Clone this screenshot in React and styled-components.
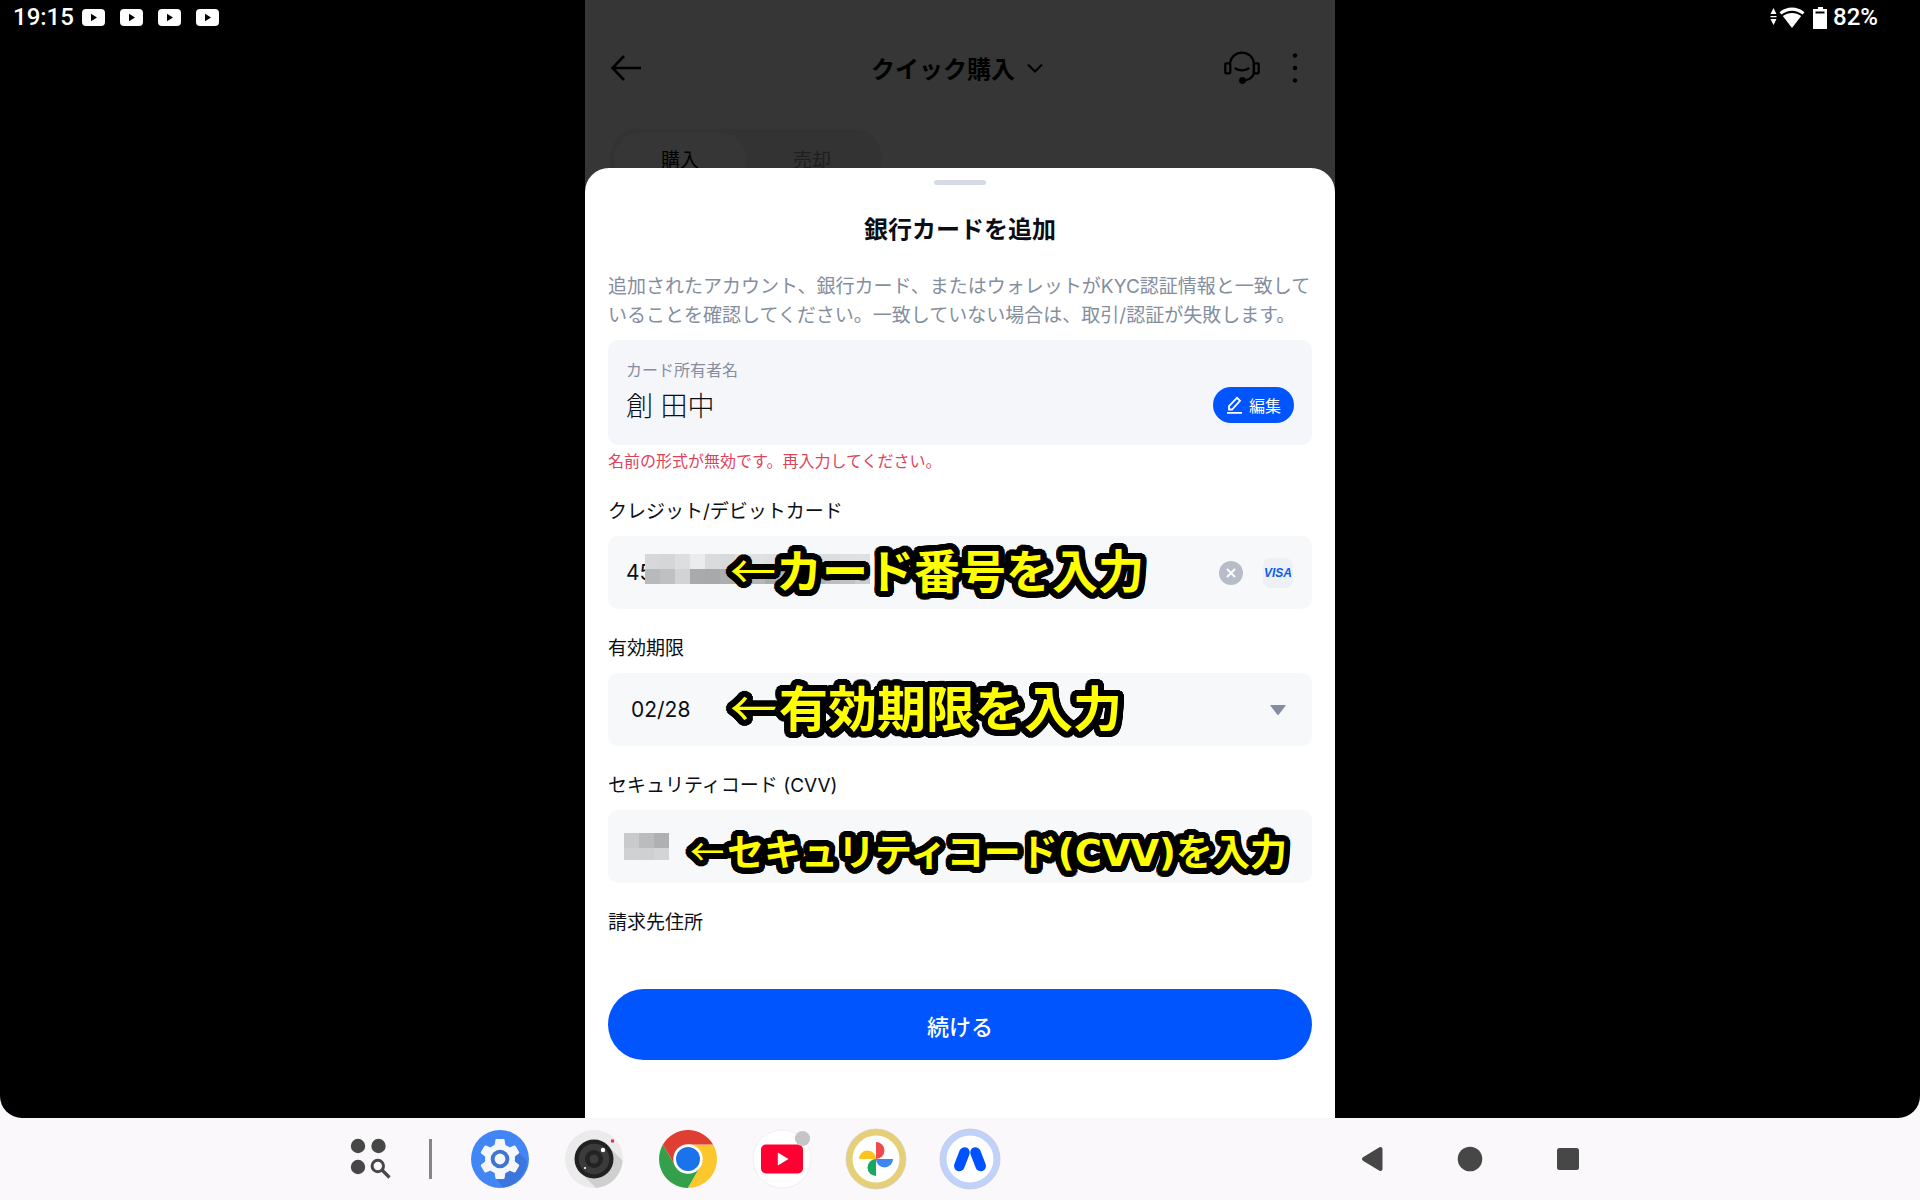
import React, { useState } from "react";
import styled, { createGlobalStyle } from "styled-components";

const cardTiles = [
  "#d8d8da", "#d5d6d8", "#dddee0", "#ebecee", "#dadbdd", "#d8d9db", "#e2e2e4", "#e0e1e2",
  "#dedfe0", "#dcddde", "#dedfe0", "#dcddde", "#dcddde", "#dedfe0", "#dfe0e1",
  "#b8b9ba", "#bfc0c2", "#d2d3d5", "#a9aaab", "#a8a9aa", "#acadae", "#b6b7b8", "#b4b5b6",
  "#a9aaab", "#b0b1b2", "#b9babb", "#b2b3b4", "#bcbdbe", "#c0c1c2", "#cbcccd",
];
const cvvTiles = ["#c9cacb", "#bbbcbd", "#afb0b1", "#d0d1d2", "#cfd0d1", "#d3d4d5"];

// round black outline for the yellow notes, built from rings of hard shadows
const ring = (radius, steps) =>
  Array.from({ length: steps }, (_, i) => {
    const angle = (i / steps) * Math.PI * 2;
    return `${Math.round(Math.cos(angle) * radius)}px ${Math.round(Math.sin(angle) * radius)}px 0 #000`;
  });
const outline = [...ring(3, 12), ...ring(6, 36)].join(", ");

const PlayBadge = () => (
  <svg width="23" height="17" viewBox="0 0 23 17">
    <rect width="23" height="17" rx="4" fill="#fff" />
    <path d="M9 4.8v7.4l6-3.7z" fill="#000" />
  </svg>
);

const Mosaic = ({ tiles, columns, lastRow }) => (
  <Tiles $columns={columns} $lastRow={lastRow} aria-hidden="true">
    {tiles.map((color, i) => (
      <Tile key={i} $color={color} />
    ))}
  </Tiles>
);

const App = () => {
  const [card, setCard] = useState("45");
  const [expiry, setExpiry] = useState("02/28");
  const [cvv, setCvv] = useState("");

  return (
    <Page>
      <GlobalStyle />
      <Screen>
        <StatusLeft>
          <span>19:15</span>
          <Badges>
            <PlayBadge />
            <PlayBadge />
            <PlayBadge />
            <PlayBadge />
          </Badges>
        </StatusLeft>

        <Phone>
          <Header>
            <IconButton aria-label="戻る">
              <svg width="32" height="28" viewBox="0 0 32 28" fill="none" stroke="#000" strokeWidth="2.6">
                <path d="M14 2 2.5 14 14 26M2.5 14H31" />
              </svg>
            </IconButton>
            <HeaderTitle>
              クイック購入
              <svg width="16" height="10" viewBox="0 0 16 10" fill="none" stroke="#000" strokeWidth="2">
                <path d="M1 1.5 8 8.5l7-7" />
              </svg>
            </HeaderTitle>
            <HeaderActions>
              <IconButton aria-label="サポート">
                <svg width="36" height="34" viewBox="0 0 36 34" fill="none" stroke="#000" strokeWidth="2.2">
                  <path d="M6 12C7 5.500 12 1.600 18 1.600S29 5.500 30 12v10c-1 4-5 7-11 7.500" />
                  <rect x="1.300" y="12.300" width="5" height="10" rx="0.800" />
                  <rect x="29.700" y="12.300" width="5" height="10" rx="0.800" />
                  <path d="M11.500 17.500c3.500 2.600 9.500 2.600 13 0" strokeLinecap="round" />
                  <circle cx="18.500" cy="29.500" r="3.400" fill="#000" stroke="none" />
                </svg>
              </IconButton>
              <IconButton aria-label="メニュー">
                <svg width="6" height="32" viewBox="0 0 6 32">
                  <circle cx="3" cy="3.500" r="2.200" />
                  <circle cx="3" cy="16" r="2.200" />
                  <circle cx="3" cy="28.500" r="2.200" />
                </svg>
              </IconButton>
            </HeaderActions>
          </Header>

          <TabsClip>
            <Tabs>
              <Tab $active>購入</Tab>
              <Tab>売却</Tab>
            </Tabs>
          </TabsClip>

          <Sheet>
            <Handle />
            <Title>銀行カードを追加</Title>
            <Notice>
              追加されたアカウント、銀行カード、またはウォレットがKYC認証情報と一致していることを確認してください。一致していない場合は、取引/認証が失敗します。
            </Notice>

            <Owner>
              <OwnerText>
                <OwnerLabel htmlFor="owner">カード所有者名</OwnerLabel>
                <OwnerInput id="owner" value="創 田中" readOnly />
              </OwnerText>
              <EditButton>
                <svg width="17" height="18" viewBox="0 0 17 18" fill="none" stroke="#fff" strokeWidth="1.800">
                  <path d="M3 13.500V10L11 1.800 14 4.800 6 13.500zM1 16.800h15" />
                </svg>
                編集
              </EditButton>
            </Owner>
            <ErrorText>名前の形式が無効です。再入力してください。</ErrorText>

            <Groups>
              <Group>
                <Label htmlFor="card">クレジット/デビットカード</Label>
                <Field>
                  <Short>
                    <Input id="card" value={card} onChange={(e) => setCard(e.target.value)} />
                  </Short>
                  <CardMask>
                    <Mosaic tiles={cardTiles} columns={15} lastRow={15} />
                  </CardMask>
                  <Callout $left={122} $size={46}>
                    <Arrow>←</Arrow>カード番号を入力
                  </Callout>
                  <FieldEnd>
                    <IconButton aria-label="クリア" onClick={() => setCard("")}>
                      <svg width="24" height="24" viewBox="0 0 24 24">
                        <circle cx="12" cy="12" r="12" fill="#b7bdc8" />
                        <path d="m8 8 8 8m0-8-8 8" stroke="#fff" strokeWidth="1.800" />
                      </svg>
                    </IconButton>
                    <Visa>VISA</Visa>
                  </FieldEnd>
                </Field>
              </Group>

              <Group>
                <Label htmlFor="expiry">有効期限</Label>
                <Field>
                  <Select id="expiry" value={expiry} onChange={(e) => setExpiry(e.target.value)}>
                    <option>02/28</option>
                  </Select>
                  <Callout $left={122} $size={49}>
                    <Arrow>←</Arrow>有効期限を入力
                  </Callout>
                  <FieldEnd>
                    <Caret width="16" height="12" viewBox="0 0 16 12">
                      <path d="M1 1h14q1 0 .4.9L8.800 10.500q-.8 1-1.600 0L.6 1.900Q0 1 1 1z" fill="#848e9e" />
                    </Caret>
                  </FieldEnd>
                </Field>
              </Group>

              <Group>
                <Label htmlFor="cvv">セキュリティコード (CVV)</Label>
                <Field $tight>
                  <Mosaic tiles={cvvTiles} columns={3} lastRow={12} />
                  <Input id="cvv" value={cvv} onChange={(e) => setCvv(e.target.value)} />
                  <Callout $left={82} $size={37} $low>
                    <Arrow>←</Arrow>セキュリティコード<Latin>(CVV)</Latin>を入力
                  </Callout>
                </Field>
              </Group>

              <Subheading>請求先住所</Subheading>
            </Groups>

            <Submit>続ける</Submit>
          </Sheet>
        </Phone>

        <StatusRight>
          <svg width="57" height="24" viewBox="0 0 57 24" fill="#fff">
            <path d="M3.500 3 6.500 9h-6zM.5 11h6v1.200h-6zM.5 14h6l-3 6z" />
            <path d="M9.500 7.200C17 1 27 1 34.500 7.200L32.600 9.600C26 4.300 18 4.300 11.400 9.600z" />
            <path d="M12.800 11C18.500 7 25.500 7 31.200 11L22 23z" />
            <path d="M48 2h5v2h4v20H43V4h5z" />
            <path d="M45.500 6.500h9v2h-9z" fill="#000" />
          </svg>
          <span>82%</span>
        </StatusRight>
      </Screen>

      <Taskbar>
        <Dock>
          <IconButton aria-label="アプリ一覧">
            <svg width="42" height="42" viewBox="0 0 42 42" fill="#474747">
              <circle cx="8" cy="8" r="7.200" />
              <circle cx="28.500" cy="8" r="7.200" />
              <circle cx="8" cy="29" r="7.200" />
              <circle cx="27.800" cy="28" r="5.700" fill="none" stroke="#474747" strokeWidth="3" />
              <path d="m32 32 7.500 7.500" stroke="#474747" strokeWidth="3.200" />
            </svg>
          </IconButton>
          <Divider />
          <Apps>
            <IconButton aria-label="設定">
              <svg width="60" height="60" viewBox="0 0 60 60">
                <circle cx="30" cy="30" r="29" fill="#4285f4" />
                <path d="M47 22 57 32a28 28 0 0 1-24 26.500L27 50z" fill="#3a76dc" />
                <g fill="#f5f7fa">
                  <circle cx="30" cy="30" r="15" />
                  {[0, 60, 120, 180, 240, 300].map((deg) => (
                    <path
                      key={deg}
                      d="M26.500 10h7q1 0 1.100 1l1 6.500h-11.200l1-6.500q.1-1 1.100-1z"
                      transform={`rotate(${deg} 30 30)`}
                    />
                  ))}
                </g>
                <circle cx="30" cy="30" r="9.300" fill="#3d75cf" />
                <circle cx="30" cy="30" r="5.400" fill="#f5f7fa" />
              </svg>
            </IconButton>
            <IconButton aria-label="カメラ">
              <svg width="60" height="60" viewBox="0 0 60 60">
                <circle cx="30" cy="30" r="29" fill="#ebebeb" />
                <path d="m45 18 13.500 13.500A29 29 0 0 1 32 59L16 43z" fill="#cfcfcf" />
                <circle cx="30" cy="30" r="19.500" fill="#212121" />
                <circle cx="30" cy="30" r="15.300" fill="#3b3b3b" />
                <circle cx="30" cy="30" r="9" fill="#232323" />
                <circle cx="30" cy="30" r="4.500" fill="#3d3d3d" />
                <circle cx="39" cy="21" r="2.200" fill="#fff" />
                <circle cx="21" cy="39" r="1.100" fill="#fff" />
                <path d="M47 10.500h3v3h-3z" fill="#f0245a" />
              </svg>
            </IconButton>
            <IconButton aria-label="Chrome">
              <svg width="60" height="60" viewBox="0 0 60 60">
                <path d="M30 15.500H55.100A29 29 0 0 0 4.900 15.500L17.440 37.250z" fill="#34a04b" transform="rotate(-120 30 30)" />
                <path d="M30 15.500H55.100A29 29 0 0 0 4.900 15.500L17.440 37.250z" fill="#fcc62d" transform="rotate(120 30 30)" />
                <path d="M30 15.500H55.100A29 29 0 0 0 4.900 15.500L17.440 37.250z" fill="#df3e32" />
                <circle cx="30" cy="30" r="14.700" fill="#fff" />
                <circle cx="30" cy="30" r="12" fill="#1a73e8" />
              </svg>
            </IconButton>
            <IconButton aria-label="YouTube">
              <svg width="60" height="60" viewBox="0 0 60 60">
                <circle cx="30" cy="30" r="29" fill="#fff" stroke="#f1eff1" />
                <rect x="9" y="15.500" width="42" height="29" rx="5" fill="#ff0033" />
                <path d="M25.800 23.500v13L36.500 30z" fill="#fff" />
                <circle cx="50.500" cy="9.500" r="7.600" fill="#c5c5c5" />
              </svg>
            </IconButton>
            <IconButton aria-label="フォト">
              <svg width="62" height="62" viewBox="-1 -1 62 62">
                <circle cx="30" cy="30" r="30" fill="#e6d077" stroke="#d5cfc0" strokeWidth="0.800" />
                <circle cx="30" cy="30" r="23.500" fill="#fff" />
                <path d="M30 13a8.500 8.500 0 0 1 0 17z" fill="#f04a50" />
                <path d="M47 30a8.500 8.500 0 0 1-17 0z" fill="#3f86f5" />
                <path d="M30 47a8.500 8.500 0 0 1 0-17z" fill="#17a862" />
                <path d="M13 30a8.500 8.500 0 0 1 17 0z" fill="#fbc41c" />
              </svg>
            </IconButton>
            <IconButton aria-label="ウォレット">
              <svg width="62" height="62" viewBox="-1 -1 62 62">
                <circle cx="30" cy="30" r="30" fill="#c0d2fa" stroke="#c5c9d6" strokeWidth="0.800" />
                <circle cx="30" cy="30" r="23.500" fill="#fff" />
                <path d="m19.300 37 5.200-13.500M40.700 37l-5.200-13.500" stroke="#0052ff" strokeWidth="10.500" strokeLinecap="round" />
              </svg>
            </IconButton>
          </Apps>
        </Dock>
        <Nav>
          <NavButton aria-label="戻る">
            <svg width="24" height="26" viewBox="0 0 24 26">
              <path d="M4 13 20.500 3v20z" fill="#474747" stroke="#474747" strokeWidth="4" strokeLinejoin="round" />
            </svg>
          </NavButton>
          <NavButton aria-label="ホーム">
            <svg width="26" height="26" viewBox="0 0 26 26">
              <circle cx="13" cy="13" r="12.300" fill="#474747" />
            </svg>
          </NavButton>
          <NavButton aria-label="履歴">
            <svg width="24" height="24" viewBox="0 0 24 24">
              <rect x="1" y="1" width="22" height="22" rx="2.500" fill="#474747" />
            </svg>
          </NavButton>
        </Nav>
      </Taskbar>
    </Page>
  );
};

export default App;

const GlobalStyle = createGlobalStyle`
  * {
    box-sizing: border-box;
  }
  body {
    margin: 0;
    font-family: Inter, "Noto Sans CJK JP", sans-serif;
    color: #0b0e14;
  }
  button, input, select {
    font-family: inherit;
    color: inherit;
    border: none;
    background: none;
    padding: 0;
    margin: 0;
  }
  svg {
    display: block;
    flex: none;
  }
`;

const Page = styled.div`
  min-height: 100vh;
  display: flex;
  flex-direction: column;
  background: #fbf8fb;
`;

const Screen = styled.div`
  flex: 1;
  display: grid;
  grid-template-columns: 1fr minmax(0, 750px) 1fr;
  background: #000;
  border-radius: 0 0 22px 22px;
`;

const Status = styled.div`
  display: flex;
  align-items: center;
  height: 34px;
  font-family: Roboto, sans-serif;
  font-weight: 500;
  font-size: 24px;
  color: #fff;
`;

const StatusLeft = styled(Status)`
  padding-left: 13px;
  gap: 8px;
`;

const StatusRight = styled(Status)`
  justify-content: flex-end;
  padding-right: 42px;
  gap: 6px;
`;

const Badges = styled.div`
  display: flex;
  gap: 15px;
`;

const Phone = styled.main`
  display: flex;
  flex-direction: column;
  background: #363636;
`;

const Header = styled.header`
  display: grid;
  grid-template-columns: 1fr auto 1fr;
  align-items: center;
  height: 129px;
  padding: 6px 37px 0 25px;
`;

const IconButton = styled.button`
  display: flex;
  align-items: center;
  cursor: pointer;
`;

const HeaderTitle = styled.h1`
  display: flex;
  align-items: center;
  gap: 12px;
  margin: 0 0 0 6px;
  font-size: 24px;
  font-weight: 700;
  color: #000;
`;

const HeaderActions = styled.div`
  display: flex;
  justify-content: flex-end;
  align-items: center;
  gap: 32px;
`;

const TabsClip = styled.div`
  height: 39px;
  padding: 0 25px;
  overflow: hidden;
`;

const Tabs = styled.div`
  display: inline-flex;
  padding: 4px;
  border-radius: 30px;
  background: #333;
`;

const Tab = styled.button`
  width: 132px;
  height: 50px;
  border-radius: 25px;
  font-size: 19px;
  background: ${(p) => (p.$active ? "#363636" : "none")};
  color: ${(p) => (p.$active ? "#000" : "#1d1f22")};
`;

const Sheet = styled.section`
  flex: 1;
  display: flex;
  flex-direction: column;
  padding: 12px 23px 58px;
  background: #fff;
  border-radius: 24px 24px 0 0;
`;

const Handle = styled.div`
  width: 52px;
  height: 5px;
  margin: 0 auto;
  border-radius: 3px;
  background: #d5dae6;
`;

const Title = styled.h2`
  margin: 27px 0 24px;
  font-size: 24px;
  line-height: 36px;
  font-weight: 700;
  text-align: center;
`;

const Notice = styled.p`
  margin: 0 0 10px;
  font-size: 19px;
  line-height: 29px;
  color: #848e9e;
`;

const Owner = styled.div`
  display: flex;
  align-items: center;
  justify-content: space-between;
  height: 105px;
  padding: 0 18px;
  border-radius: 10px;
  background: #f4f6fa;
`;

const OwnerText = styled.div`
  display: flex;
  flex-direction: column;
`;

const OwnerLabel = styled.label`
  font-size: 16px;
  line-height: 24px;
  color: #848e9e;
`;

const OwnerInput = styled.input`
  width: 300px;
  height: 46px;
  font-size: 27px;
  font-weight: 300;
  outline: none;
`;

const EditButton = styled.button`
  display: flex;
  align-items: center;
  justify-content: center;
  align-self: flex-end;
  gap: 6px;
  width: 81px;
  height: 36px;
  margin-bottom: 22px;
  border-radius: 18px;
  background: #0055ff;
  color: #fff;
  font-size: 16px;
`;

const ErrorText = styled.p`
  margin: 4px 0 25px;
  font-size: 16px;
  line-height: 24px;
  color: #df4359;
`;

const Groups = styled.div`
  display: flex;
  flex-direction: column;
  gap: 26px;
`;

const Group = styled.div`
  display: flex;
  flex-direction: column;
  gap: 10px;
`;

const Label = styled.label`
  font-size: 19px;
  line-height: 28px;
`;

const Subheading = styled.h3`
  margin: 0;
  font-size: 19px;
  line-height: 28px;
  font-weight: 400;
`;

const Field = styled.div`
  position: relative;
  display: flex;
  align-items: center;
  height: 73px;
  padding: 0 ${(p) => (p.$tight ? 16 : 18)}px;
  border-radius: 10px;
  background: #f6f8fa;
`;

const Input = styled.input`
  flex: 1;
  min-width: 0;
  height: 48px;
  font-size: 21px;
  outline: none;
`;

const Short = styled.div`
  display: flex;
  width: 19px;
`;

const Select = styled.select`
  flex: 1;
  height: 48px;
  padding-left: 5px;
  font-size: 21px;
  appearance: none;
  outline: none;
`;

const CardMask = styled.div`
  padding-bottom: 8px;
`;

const Tiles = styled.div`
  display: grid;
  grid-template-columns: repeat(${(p) => p.$columns}, 15px);
  grid-template-rows: 15px ${(p) => p.$lastRow}px;
`;

const Tile = styled.span`
  background: ${(p) => p.$color};
`;

const FieldEnd = styled.div`
  display: flex;
  align-items: center;
  gap: 20px;
  margin-left: auto;
  padding-right: 1px;
`;

const Caret = styled.svg`
  margin-right: 7px;
`;

const Visa = styled.span`
  width: 30px;
  border-radius: 8px;
  background: #edf0f5;
  color: #0f5bf0;
  font-family: "Liberation Sans", sans-serif;
  font-size: 12px;
  font-weight: 700;
  font-style: italic;
  line-height: 30px;
  text-align: center;
`;

/* yellow note drawn over a field */
const Callout = styled.span`
  position: absolute;
  left: ${(p) => p.$left}px;
  top: ${(p) => (p.$low ? 4 : -4)}px;
  font-family: "Noto Sans CJK JP", sans-serif;
  font-size: ${(p) => p.$size}px;
  font-weight: 700;
  line-height: 73px;
  white-space: nowrap;
  color: #ff0;
  text-shadow: ${outline};
  pointer-events: none;
`;

const Arrow = styled.span`
  font-weight: 400;
`;

const Latin = styled.span`
  font-family: "DejaVu Sans", sans-serif;
`;

const Submit = styled.button`
  height: 71px;
  margin-top: auto;
  border-radius: 36px;
  background: #0055ff;
  color: #fff;
  font-size: 22px;
  font-weight: 500;
  cursor: pointer;
`;

const Taskbar = styled.footer`
  display: flex;
  align-items: center;
  justify-content: space-between;
  height: 82px;
  padding: 0 303px 0 350px;
`;

const Dock = styled.div`
  display: flex;
  align-items: center;
`;

const Divider = styled.div`
  width: 3px;
  height: 40px;
  margin: 0 38px 0 37px;
  background: #868486;
`;

const Apps = styled.div`
  display: grid;
  grid-template-columns: repeat(6, 60px);
  justify-items: center;
  gap: 34px;
`;

const Nav = styled.nav`
  display: flex;
`;

const NavButton = styled(IconButton)`
  justify-content: center;
  width: 98px;
  height: 48px;
`;
